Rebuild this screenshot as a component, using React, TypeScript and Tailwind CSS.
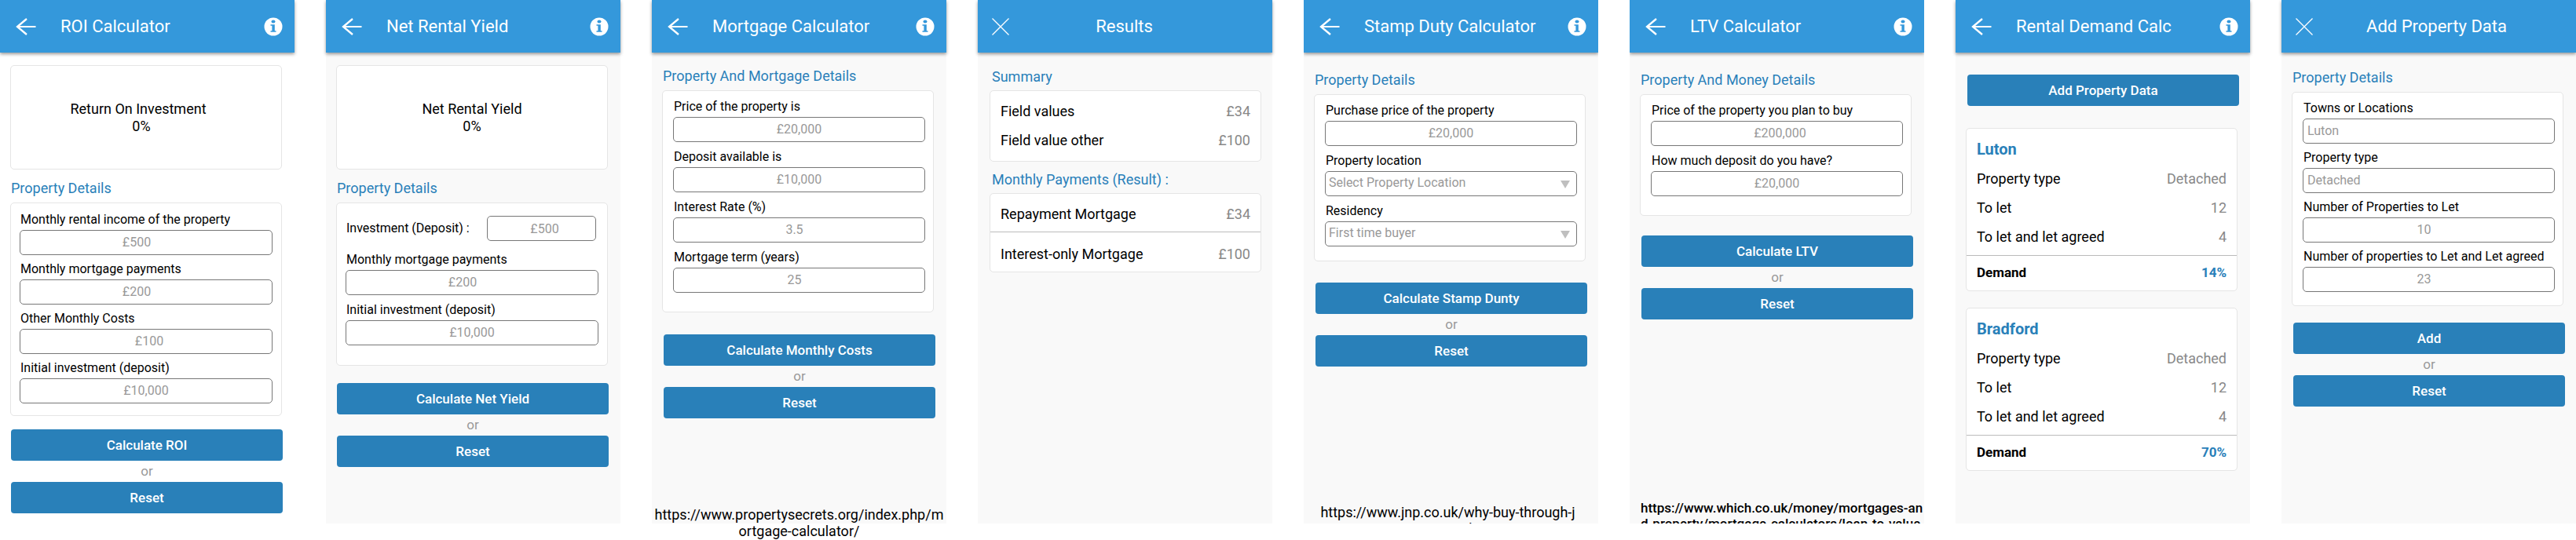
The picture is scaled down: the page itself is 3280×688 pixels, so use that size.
import { useId, type ReactNode } from "react";

function BackIcon() {
  return (
    <svg width="26" height="22" viewBox="0 0 26 22" fill="none" stroke="currentColor" strokeWidth="2.300">
      <path d="M14 1 2 11l12 10" />
      <path d="M2 11h23.500" strokeWidth="2" />
    </svg>
  );
}

function CloseIcon() {
  return (
    <svg width="22" height="22" viewBox="0 0 22 22" fill="none" stroke="currentColor" strokeWidth="1.300">
      <path d="M.5.5l21 21M21.500.5l-21 21" />
    </svg>
  );
}

function InfoIcon() {
  return (
    <svg width="24" height="24" viewBox="0 0 24 24">
      <circle cx="12" cy="12" r="11.500" fill="white" />
      <ellipse cx="12" cy="5.500" rx="2.500" ry="2" fill="#3498db" />
      <path d="M8.500 9.200h5.300v8h1.700v1.600h-7v-1.600h1.900v-6.400H8.500z" fill="#3498db" />
    </svg>
  );
}

type ScreenProps = {
  title: string;
  close?: boolean;
  titleSpace?: string;
  white?: boolean;
  clip?: boolean;
  children: ReactNode;
};

function Screen({ title, close, titleSpace = "pr-[42px]", white, clip, children }: ScreenProps) {
  return (
    <section className={`flex h-[667px] min-w-0 flex-1 flex-col ${white ? "bg-white" : "bg-[#f9f9f9]"} ${clip ? "overflow-hidden" : ""}`}>
      <header className="flex h-[67px] shrink-0 items-center bg-[#3498db] text-white shadow-[0_2px_4px_rgba(0,0,0,0.4)]">
        {close ? (
          <>
            <button type="button" aria-label="Close" className="ml-[18px]"><CloseIcon /></button>
            <h1 className={`flex-1 text-center text-[22px] leading-[26px] ${titleSpace}`}>{title}</h1>
          </>
        ) : (
          <>
            <button type="button" aria-label="Back" className="ml-5"><BackIcon /></button>
            <h1 className="ml-[31px] flex-1 text-[22px] leading-[26px]">{title}</h1>
            <button type="button" aria-label="Information" className="mr-[15px]"><InfoIcon /></button>
          </>
        )}
      </header>
      {children}
    </section>
  );
}

function Heading({ children }: { children: ReactNode }) {
  return <h2 className="ml-[14px] text-[18px] leading-[22px] text-[#2980b9]">{children}</h2>;
}

function Card({ className = "", children }: { className?: string; children: ReactNode }) {
  return <div className={`ml-[13px] mr-4 rounded-[5px] border border-[#e5e5e5] bg-white ${className}`}>{children}</div>;
}

const boxStyle = "h-8 rounded-[5px] border border-[#777777] bg-white text-[16px] leading-[20px]";

function Field({ label, hint, shift = "text-center" }: { label: string; hint: string; shift?: string }) {
  const id = useId();
  return (
    <div className="flex flex-col">
      <label htmlFor={id} className="ml-px text-[16px] leading-[20px]">{label}</label>
      <input id={id} type="text" placeholder={hint} className={`mt-[3px] w-full pb-[2px] placeholder:text-[#999999] ${boxStyle} ${shift}`} />
    </div>
  );
}

function SelectField({ label, value }: { label: string; value: string }) {
  const id = useId();
  return (
    <div className="flex flex-col">
      <label htmlFor={id} className="ml-px text-[16px] leading-[20px]">{label}</label>
      <div className="relative mt-[3px] flex flex-col">
        <select id={id} className={`w-full appearance-none pb-[2px] pl-1 text-[#999999] ${boxStyle}`}>
          <option>{value}</option>
        </select>
        <svg className="pointer-events-none absolute right-[9px] top-3 text-[#bfbfbf]" width="12" height="10" viewBox="0 0 12 10">
          <path d="M0 0h12L6 10z" fill="currentColor" />
        </svg>
      </div>
    </div>
  );
}

function PrimaryButton({ children }: { children: ReactNode }) {
  return <button type="button" className="h-10 w-full rounded-[4px] bg-[#2980b9] text-[17px] font-medium leading-[20px] text-white">{children}</button>;
}

function Actions({ action, className }: { action: string; className: string }) {
  return (
    <div className={`flex flex-col ${className}`}>
      <PrimaryButton>{action}</PrimaryButton>
      <p className="h-[27px] text-center text-[17px] leading-[27px] text-[#999999]">or</p>
      <PrimaryButton>Reset</PrimaryButton>
    </div>
  );
}

function Row({ label, value }: { label: string; value: string }) {
  return (
    <div className="flex justify-between text-[18px] leading-[22px]">
      <dt>{label}</dt>
      <dd className="text-[#888888]">{value}</dd>
    </div>
  );
}

function TownCard({ town, demand, className }: { town: string; demand: string; className: string }) {
  return (
    <Card className={className}>
      <h2 className="px-[13px] pt-[14px] text-[20px] font-bold leading-[24px] text-[#2980b9]">{town}</h2>
      <dl className="flex flex-col">
        <div className="mt-[15px] flex flex-col gap-[15px] border-b border-[#bbbbbb] px-[13px] pb-3">
          <Row label="Property type" value="Detached" />
          <Row label="To let" value="12" />
          <Row label="To let and let agreed" value="4" />
        </div>
        <div className="flex items-center justify-between px-[13px] pb-3 pt-[10px] text-[17px] font-bold leading-[22px]">
          <dt>Demand</dt>
          <dd className="text-[#2980b9]">{demand}</dd>
        </div>
      </dl>
    </Card>
  );
}

export default function App() {
  return (
    <main className="flex gap-10 bg-white pb-[21px] font-[Roboto,sans-serif] text-black">
      <Screen title="ROI Calculator" white>
        <Card className="mt-4 flex h-[133px] flex-col items-center justify-center text-[18px] leading-[22px]">
          <p className="pr-5">Return On Investment</p>
          <p className="pr-3">0%</p>
        </Card>
        <div className="mt-[13px]"><Heading>Property Details</Heading></div>
        <Card className="mt-[7px] flex flex-col gap-2 px-[11px] pb-[15px] pt-[11px]">
          <Field label="Monthly rental income of the property" hint="£500" shift="pr-6 text-center" />
          <Field label="Monthly mortgage payments" hint="£200" shift="pr-6 text-center" />
          <Field label="Other Monthly Costs" hint="£100" shift="pl-2 text-center" />
          <Field label="Initial investment (deposit)" hint="£10,000" />
        </Card>
        <Actions action="Calculate ROI" className="ml-[14px] mr-[15px] mt-[17px]" />
      </Screen>

      <Screen title="Net Rental Yield">
        <Card className="mt-4 flex h-[133px] flex-col items-center justify-center text-[18px] leading-[22px]">
          <p>Net Rental Yield</p>
          <p>0%</p>
        </Card>
        <div className="mt-[13px]"><Heading>Property Details</Heading></div>
        <Card className="mt-[7px] flex flex-col px-[11px] pb-[25px] pt-4">
          <div className="flex items-center justify-between pr-[3px]">
            <label htmlFor="net-deposit" className="ml-px text-[16px] leading-[20px]">Investment (Deposit) :</label>
            <input id="net-deposit" type="text" placeholder="£500" className={`w-[139px] pl-2 text-center placeholder:text-[#999999] ${boxStyle}`} />
          </div>
          <div className="mt-[14px] flex flex-col gap-[9px]">
            <Field label="Monthly mortgage payments" hint="£200" shift="pr-6 text-center" />
            <Field label="Initial investment (deposit)" hint="£10,000" />
          </div>
        </Card>
        <Actions action="Calculate Net Yield" className="ml-[14px] mr-[15px] mt-[22px]" />
      </Screen>

      <Screen title="Mortgage Calculator">
        <div className="mt-[19px]"><Heading>Property And Mortgage Details</Heading></div>
        <Card className="mt-[7px] flex flex-col gap-[9px] pb-6 pl-[13px] pr-[10px] pt-[10px]">
          <Field label="Price of the property is" hint="£20,000" />
          <Field label="Deposit available is" hint="£10,000" />
          <Field label="Interest Rate (%)" hint="3.5" shift="pr-3 text-center" />
          <Field label="Mortgage term (years)" hint="25" shift="pr-3 text-center" />
        </Card>
        <Actions action="Calculate Monthly Costs" className="ml-[15px] mr-[14px] mt-7" />
        <a href="https://www.propertysecrets.org/index.php/mortgage-calculator/" className="mt-[112px] break-all text-center text-[18px] leading-[21px]">
          https://www.propertysecrets.org/index.php/mortgage-calculator/
        </a>
      </Screen>

      <Screen title="Results" close>
        <div className="ml-1 mt-5"><Heading>Summary</Heading></div>
        <div className="ml-[2px] mr-[-2px] mt-[6px]">
          <Card className="px-[13px] py-[15px]">
            <dl className="flex flex-col gap-[15px]">
              <Row label="Field values" value="£34" />
              <Row label="Field value other" value="£100" />
            </dl>
          </Card>
        </div>
        <div className="ml-1 mt-3"><Heading>Monthly Payments (Result) :</Heading></div>
        <div className="ml-[2px] mr-[-2px] mt-[6px]">
          <Card>
            <dl className="flex flex-col">
              <div className="border-b border-[#bbbbbb] px-[13px] pb-[11px] pt-[15px]"><Row label="Repayment Mortgage" value="£34" /></div>
              <div className="px-[13px] pb-[11px] pt-[17px]"><Row label="Interest-only Mortgage" value="£100" /></div>
            </dl>
          </Card>
        </div>
      </Screen>

      <Screen title="Stamp Duty Calculator" clip>
        <div className="mt-6"><Heading>Property Details</Heading></div>
        <Card className="mt-[7px] flex flex-col gap-[9px] pb-[18px] pl-[13px] pr-[10px] pt-[10px]">
          <Field label="Purchase price of the property" hint="£20,000" />
          <SelectField label="Property location" value="Select Property Location" />
          <SelectField label="Residency" value="First time buyer" />
        </Card>
        <Actions action="Calculate Stamp Dunty" className="ml-[15px] mr-[14px] mt-[27px]" />
        <a href="https://www.jnp.co.uk/" className="mt-[175px] break-all pl-5 pr-7 text-center text-[18px] leading-[21px]">
          https://www.jnp.co.uk/why-buy-through-jnp/stamp-duty/
        </a>
      </Screen>

      <Screen title="LTV Calculator" clip>
        <div className="mt-6"><Heading>Property And Money Details</Heading></div>
        <Card className="mt-[7px] flex flex-col gap-[9px] pb-6 pl-[13px] pr-[10px] pt-[10px]">
          <Field label="Price of the property you plan to buy" hint="£200,000" shift="pl-2 text-center" />
          <Field label="How much deposit do you have?" hint="£20,000" />
        </Card>
        <Actions action="Calculate LTV" className="ml-[15px] mr-[14px] mt-[25px]" />
        <a href="https://www.which.co.uk/" className="mt-[230px] break-all pl-[14px] text-[17px] font-medium leading-[20px]">
          https://www.which.co.uk/money/mortgages-and-property/mortgage-calculators/loan-to-value
        </a>
      </Screen>

      <Screen title="Rental Demand Calc">
        <div className="ml-[15px] mr-[14px] mt-7"><PrimaryButton>Add Property Data</PrimaryButton></div>
        <TownCard town="Luton" demand="14%" className="mt-7" />
        <TownCard town="Bradford" demand="70%" className="mt-[21px]" />
      </Screen>

      <Screen title="Add Property Data" close titleSpace="pr-5">
        <div className="mt-[21px]"><Heading>Property Details</Heading></div>
        <Card className="mt-[7px] flex flex-col gap-2 pb-[17px] pl-[13px] pr-[10px] pt-[10px]">
          <Field label="Towns or Locations" hint="Luton" shift="pl-[5px]" />
          <Field label="Property type" hint="Detached" shift="pl-[5px]" />
          <Field label="Number of Properties to Let" hint="10" shift="pr-3 text-center" />
          <Field label="Number of properties to Let and Let agreed" hint="23" shift="pr-3 text-center" />
        </Card>
        <Actions action="Add" className="ml-[15px] mr-[14px] mt-[21px]" />
      </Screen>
    </main>
  );
}
